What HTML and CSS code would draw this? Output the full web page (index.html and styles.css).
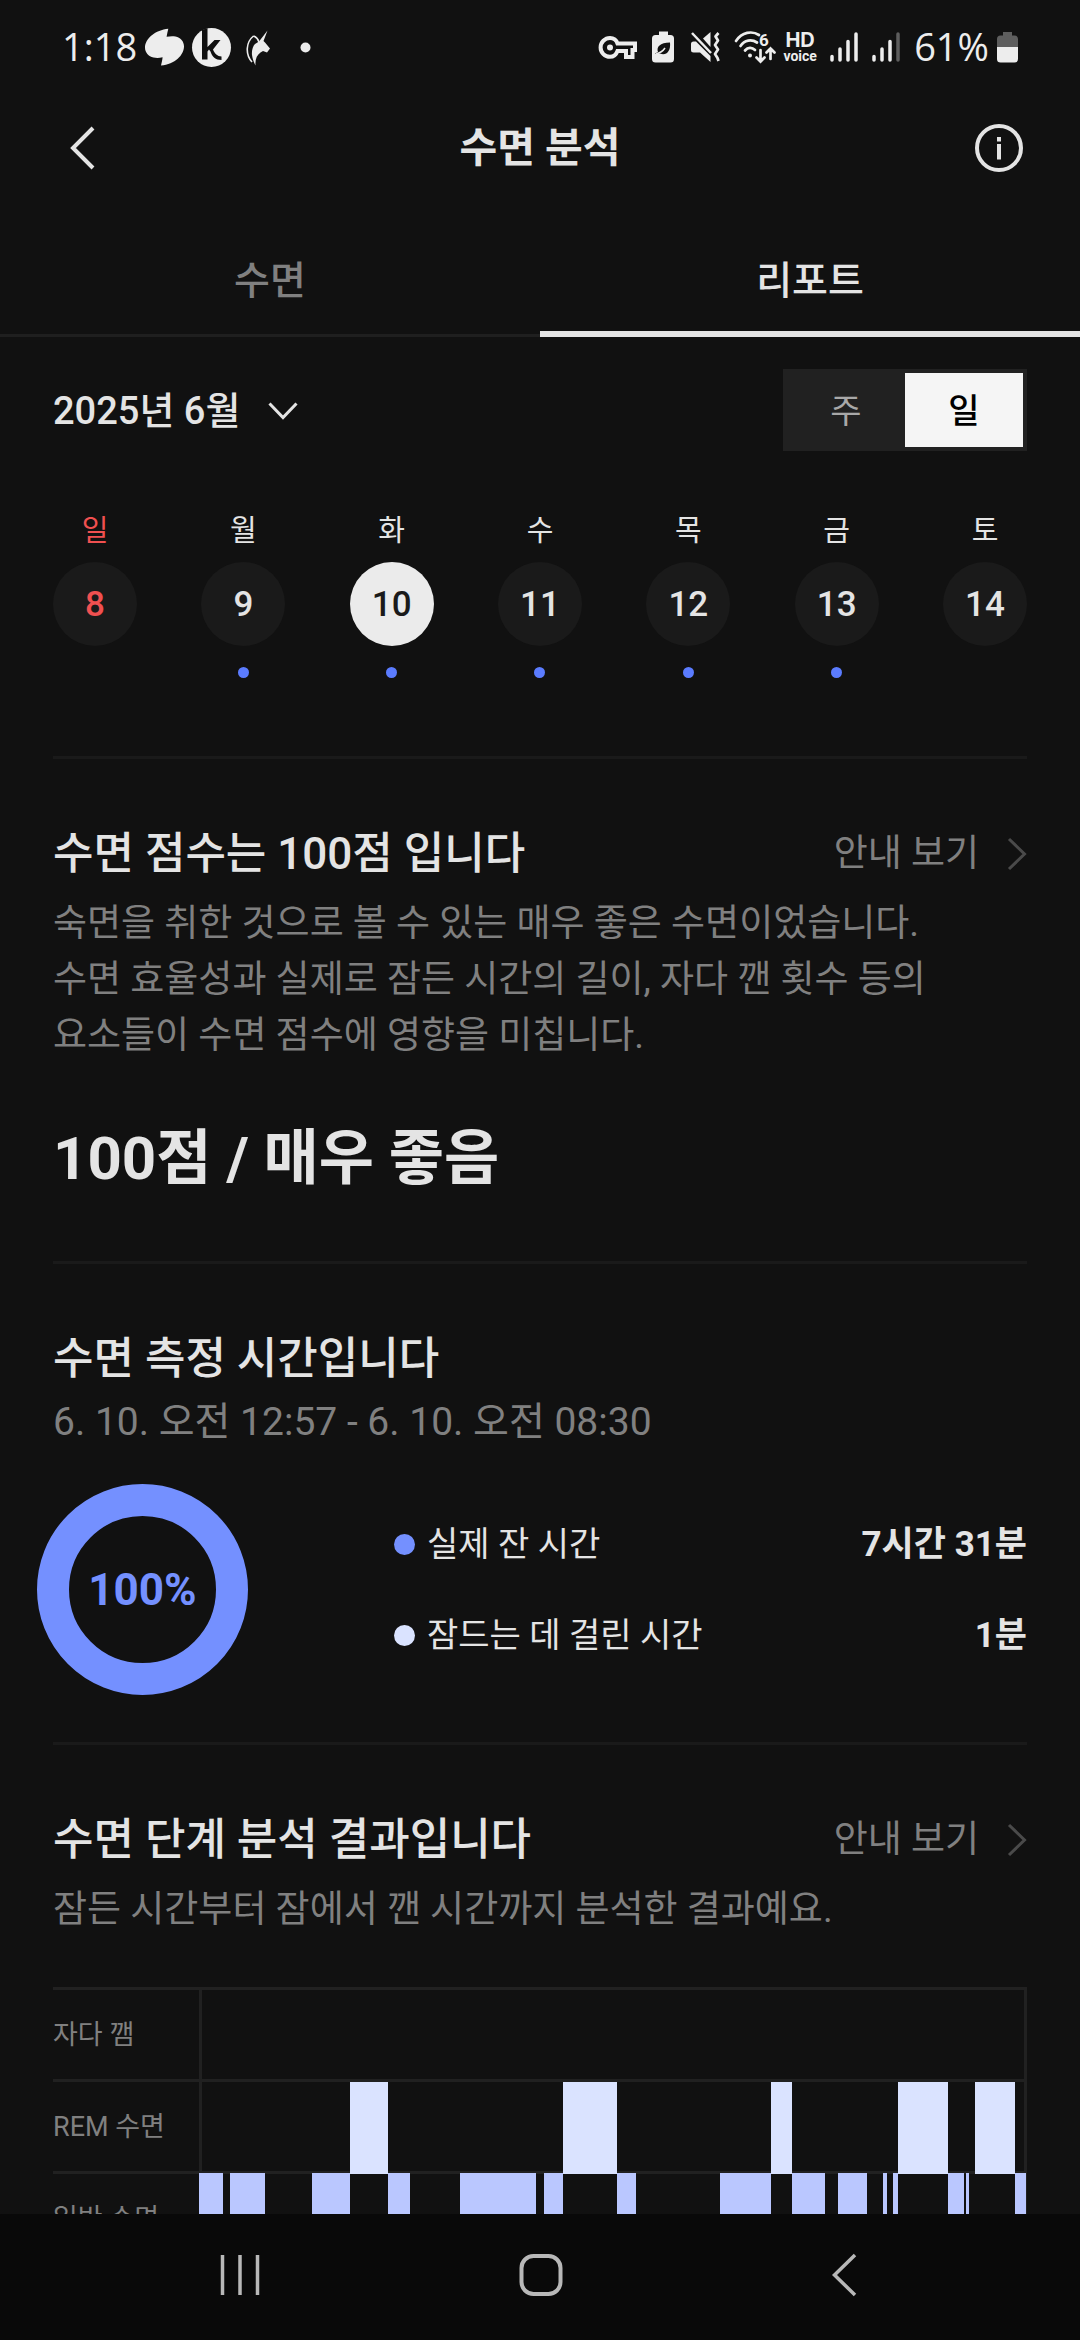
FILE: index.html
```html
<!DOCTYPE html>
<html lang="ko">
<head>
<meta charset="utf-8">
<meta name="viewport" content="width=device-width, initial-scale=1">
<title>수면 분석</title>
<link rel="stylesheet" href="styles.css">
</head>
<body>
<div class="status-bar">
  <div class="status-left">
    <span class="clock">1:18</span>
    <svg width="39" height="39" viewBox="0 0 39 39" fill="#ededed"><path d="M23.300 0.800C22.700 3.500 22 6 21.600 8.800C24.500 8.200 27.500 7.800 30.500 8.500C35.500 9.500 39 13.500 39 18.300C39 27 30 36.500 16 37.500C16.600 35 17.300 32.500 17.600 29.300C14.500 30 11.500 30.200 8.500 29.500C3.500 28.500 0 24.500 0 19.800C0 10.500 10.500 2 23.300 0.800Z"/></svg>
    <svg width="39" height="39" viewBox="0 0 39 39"><circle cx="19.500" cy="19.500" r="19.500" fill="#ededed"/><path d="M10 2v29.500h5.500v-8l1.500-2 1.500 2c1.500 5 5 8.500 11 8.500v-3.500c-4 0-7-3-8.500-7l7.500-9.500h-6L15.500 19V0z" fill="#101010"/></svg>
    <svg width="39" height="39" viewBox="0 0 39 39" fill="none" stroke="#ededed"><path d="M28.500 2.500L20 13.500L16 16C14 18 12.500 22 13 27C13.500 31 15 35 16.500 37.500C16 31 18 27 21.500 24.500L24 23L28 24.500L31 20.500L26 14.500L24.500 13Z" fill="#ededed" stroke="none"/><path d="M14.500 8C7 14 6 26 13 34M14.500 8C17 9 19 11 20 14" stroke-width="1.600"/></svg>
    <svg width="39" height="39" viewBox="0 0 39 39"><circle cx="19.500" cy="19.500" r="5" fill="#ededed"/></svg>
  </div>
  <div class="status-right">
    <svg width="39" height="32" viewBox="0 0 39 32" fill="none" stroke="#ededed" stroke-width="4"><path d="M18.500 12.500H36v6.500h-2.500v7H27v-6h-8.500C17 24 14 25.800 11 25.800a9.300 9.300 0 1 1 0-18.800c3.500 0 6.300 2 7.500 5.500z"/><circle cx="11" cy="16.400" r="3" fill="#ededed" stroke="none"/></svg>
    <svg width="24" height="32" viewBox="0 0 24 32"><path d="M7 0.500h9v3.500h2.500a3.500 3.500 0 0 1 3.500 3.500V28a3.500 3.500 0 0 1-3.500 3.500h-15A3.500 3.500 0 0 1 0 28V7.500A3.500 3.500 0 0 1 3.500 4H7z" fill="#ededed"/><path d="M3 23c1-1 2-1.500 3-2c-2-5 2-9.500 12-9.500c1 9-4 13.500-10 11c-1.500 0-3 .500-5 .500z" fill="#101010"/><path d="M4 23c4-1 7-3 9-6" stroke="#ededed" stroke-width="1.500" fill="none"/></svg>
    <svg width="30" height="32" viewBox="0 0 30 32" fill="#ededed"><path d="M6 10.500L20.500 25v6L10 21.500H3.500A2.500 2.500 0 0 1 1 19v-6a2.500 2.500 0 0 1 2.500-2.500z"/><path d="M13 7.500L20.500 1v15z"/><path d="M2 2l19 20" stroke="#ededed" stroke-width="2.500"/><path d="M28.500 2l-3 3.500 2.500 4-3 4.500 3 4.500-3 4.500 2.500 4 1 3" fill="none" stroke="#ededed" stroke-width="2.700" stroke-linejoin="round"/></svg>
    <div class="status-pair">
      <svg width="42" height="32" viewBox="0 0 42 32" fill="none" stroke="#ededed" stroke-width="2.700" stroke-linecap="round"><path d="M2 10C8 1 18-.500 25 4M6.500 15c4-6 11-7 16.500-3.500M11 19.500c3-3.500 7-3.500 10-.500"/><circle cx="16" cy="24.500" r="2" fill="#ededed" stroke="none"/><text x="25" y="15" font-family="Roboto, sans-serif" font-size="17" font-weight="700" fill="#ededed" stroke="none">6</text><path d="M26.500 19v11M22.500 26.500l4 4 4-4M36.500 28V17.500M32.500 21.500l4-4 4 4"/></svg>
      <div class="hd-voice"><span class="hd">HD</span><span class="voice">voice</span></div>
    </div>
    <svg width="28" height="32" viewBox="0 0 28 32" stroke="#ededed" stroke-width="3.500" stroke-linecap="round"><path d="M2 25.500v3.500M10 18v11M18 10.500V29M26 3v26"/></svg>
    <svg width="28" height="32" viewBox="0 0 28 32" stroke="#ededed" stroke-width="3.500" stroke-linecap="round"><path d="M2 25.500v3.500M10 18v11M18 10.500V29"/><path d="M26 3v26" stroke="#5e5e5e"/></svg>
    <div class="status-pair">
      <span class="clock">61%</span>
      <svg width="21" height="32" viewBox="0 0 21 32"><path d="M6 1h9v3.500h2.500A3.500 3.500 0 0 1 21 8v8H0V8a3.500 3.500 0 0 1 3.500-3.500H6z" fill="#5e5e5e"/><path d="M0 16h21v12a3.500 3.500 0 0 1-3.500 3.500h-14A3.500 3.500 0 0 1 0 28z" fill="#ededed"/></svg>
    </div>
  </div>
</div>

<header class="app-header">
  <button class="icon-button" aria-label="뒤로"><svg width="48" height="48" viewBox="0 0 48 48" fill="none" stroke="#e4e4e4" stroke-width="4"><path d="M36 4L16 24l20 20"/></svg></button>
  <h1>수면 분석</h1>
  <button class="icon-button" aria-label="정보"><svg width="48" height="48" viewBox="0 0 48 48" fill="none" stroke="#e4e4e4" stroke-width="4"><circle cx="24" cy="24" r="22"/><path d="M24 20v15.500M24 13v4.500"/></svg></button>
</header>

<nav class="tabs">
  <button class="tab">수면</button>
  <button class="tab tab-active">리포트</button>
</nav>

<main class="content">
  <div class="period">
    <button class="month">2025년 6월<svg width="30" height="20" viewBox="0 0 30 20" fill="none" stroke="#e4e4e4" stroke-width="3"><path d="M1.500 2.500L15 16.500l13.500-14"/></svg></button>
    <div class="toggle">
      <button class="toggle-item">주</button>
      <button class="toggle-item toggle-active">일</button>
    </div>
  </div>

  <div class="week">
    <div class="day sunday"><span class="day-name">일</span><button class="day-number">8</button></div>
    <div class="day recorded"><span class="day-name">월</span><button class="day-number">9</button></div>
    <div class="day recorded selected"><span class="day-name">화</span><button class="day-number">10</button></div>
    <div class="day recorded"><span class="day-name">수</span><button class="day-number">11</button></div>
    <div class="day recorded"><span class="day-name">목</span><button class="day-number">12</button></div>
    <div class="day recorded"><span class="day-name">금</span><button class="day-number">13</button></div>
    <div class="day"><span class="day-name">토</span><button class="day-number">14</button></div>
  </div>

  <section class="card">
    <div class="card-head">
      <h2>수면 점수는 100점 입니다</h2>
      <a class="guide" href="#">안내 보기<svg width="20" height="34" viewBox="0 0 20 34" fill="none" stroke="#4a4a4a" stroke-width="3"><path d="M2 2l15.500 15L2 32"/></svg></a>
    </div>
    <p class="lead">숙면을 취한 것으로 볼 수 있는 매우 좋은 수면이었습니다.<br>수면 효율성과 실제로 잠든 시간의 길이, 자다 깬 횟수 등의<br>요소들이 수면 점수에 영향을 미칩니다.</p>
    <p class="score">100점 / 매우 좋음</p>
  </section>

  <section class="card card-time">
    <h2>수면 측정 시간입니다</h2>
    <p class="range">6. 10. 오전 12:57 - 6. 10. 오전 08:30</p>
    <div class="time-summary">
      <div class="donut">100%</div>
      <dl class="legend">
        <div class="legend-row"><dt class="asleep">실제 잔 시간</dt><dd>7시간 31분</dd></div>
        <div class="legend-row"><dt class="latency">잠드는 데 걸린 시간</dt><dd>1분</dd></div>
      </dl>
    </div>
  </section>

  <section class="card card-stages">
    <div class="card-head">
      <h2>수면 단계 분석 결과입니다</h2>
      <a class="guide" href="#">안내 보기<svg width="20" height="34" viewBox="0 0 20 34" fill="none" stroke="#4a4a4a" stroke-width="3"><path d="M2 2l15.500 15L2 32"/></svg></a>
    </div>
    <p class="lead">잠든 시간부터 잠에서 깬 시간까지 분석한 결과예요.</p>
    <div class="stages">
      <div class="stage"><span class="stage-name">자다 깸</span><div class="plot"></div></div>
      <div class="stage"><span class="stage-name">REM 수면</span>
        <div class="plot"><svg class="bars rem" viewBox="0 0 828 92" preserveAspectRatio="none"><path d="M151 0h38v92h-38zM364 0h54v92h-54zM572 0h21v92h-21zM699 0h50v92h-50zM776 0h40v92h-40z"/></svg></div>
      </div>
      <div class="stage"><span class="stage-name">일반 수면</span>
        <div class="plot"><svg class="bars light" viewBox="0 0 828 92" preserveAspectRatio="none"><path d="M0 0h24v92H0zM31 0h35v92H31zM113 0h38v92h-38zM189 0h22v92h-22zM261 0h76v92h-76zM345 0h19v92h-19zM418 0h19v92h-19zM521 0h51v92h-51zM593 0h33v92h-33zM639 0h29v92h-29zM684 0h4v92h-4zM694 0h5v92h-5zM749 0h16v92h-16zM767 0h3v92h-3zM816 0h11v92h-11z"/></svg></div>
      </div>
    </div>
  </section>
</main>

<footer class="system-nav">
  <button aria-label="최근 앱"><svg width="48" height="48" viewBox="0 0 48 48" fill="none" stroke="#b8b8b8" stroke-width="3.500"><path d="M7.500 4v40M25 4v40M42.500 4v40"/></svg></button>
  <button aria-label="홈"><svg width="48" height="48" viewBox="0 0 48 48" fill="none" stroke="#b8b8b8" stroke-width="4"><rect x="5.500" y="5" width="39" height="38" rx="12"/></svg></button>
  <button aria-label="이전"><svg width="48" height="48" viewBox="0 0 48 48" fill="none" stroke="#b8b8b8" stroke-width="3.500"><path d="M38 4L17.500 24L38 44"/></svg></button>
</footer>
</body>
</html>
```
FILE: styles.css
```css
* {
  box-sizing: border-box;
}

body {
  margin: 0;
  height: 100vh;
  display: flex;
  flex-direction: column;
  overflow: hidden;
  background: #111111;
  color: #e4e4e4;
  font-family: Roboto, "Noto Sans CJK KR", sans-serif;
}

h1, h2, p, dl, dd {
  margin: 0;
}

button {
  padding: 0;
  border: 0;
  background: none;
  color: inherit;
  font: inherit;
}

svg {
  display: block;
  flex: none;
  overflow: visible;
}

/* Status bar */
.status-bar {
  height: 94px;
  flex: none;
  display: flex;
  justify-content: space-between;
  align-items: center;
  padding: 0 62px 0 62px;
  color: #ededed;
}

.status-left {
  display: flex;
  align-items: center;
  gap: 8px;
}

.status-right {
  display: flex;
  align-items: center;
  gap: 14px;
}

.status-pair {
  display: flex;
  align-items: center;
  gap: 8px;
}

.clock {
  padding-bottom: 2px;
  font-family: "Open Sans", Roboto, sans-serif;
  font-size: 38px;
  line-height: 48px;
}

.hd-voice {
  display: flex;
  flex-direction: column;
  align-items: center;
  width: 32px;
}

.hd {
  font: 700 20px/18px Inter, sans-serif;
}

.voice {
  font: 700 14px/14px Roboto, sans-serif;
}

/* Header and tabs */
.app-header {
  height: 108px;
  flex: none;
  display: flex;
  justify-content: space-between;
  align-items: center;
  padding: 0 57px;
}

.app-header h1 {
  font-size: 41px;
  line-height: 56px;
  font-weight: 700;
}

.tabs {
  height: 135px;
  flex: none;
  display: flex;
}

.tab {
  flex: 1;
  padding-top: 22px;
  box-shadow: inset 0 -3px #1f1f1f;
  color: #808080;
  font-size: 39px;
  line-height: 56px;
  font-weight: 500;
}

.tab-active {
  box-shadow: inset 0 -6px #e4e4e4;
  color: #e4e4e4;
}

/* Content */
.content {
  flex: 1;
  min-height: 0;
  overflow: hidden;
  padding: 32px 53px 0;
}

.period {
  display: flex;
  justify-content: space-between;
  align-items: center;
}

.month {
  display: flex;
  align-items: center;
  gap: 28px;
  padding-top: 2px;
  font-size: 38px;
  line-height: 56px;
  font-weight: 500;
}

.toggle {
  display: flex;
  padding: 4px;
  background: #212121;
}

.toggle-item {
  width: 118px;
  height: 74px;
  padding-top: 2px;
  color: #a8a8a8;
  font-size: 34px;
  line-height: 45px;
}

.toggle-active {
  background: #f5f5f5;
  color: #000000;
  font-weight: 500;
}

.week {
  display: flex;
  justify-content: space-between;
  height: 246px;
  margin-top: 59px;
}

.day {
  display: flex;
  flex-direction: column;
  align-items: center;
}

.day-name {
  font-size: 29px;
  line-height: 42px;
}

.day-number {
  width: 84px;
  height: 84px;
  margin-top: 10px;
  border-radius: 50%;
  background: #1a1a1a;
  font-size: 35px;
  line-height: 45px;
  font-weight: 500;
}

.sunday {
  color: #f05050;
}

.selected .day-number {
  background: #ebebeb;
  color: #1a1a1a;
}

.recorded::after {
  content: "";
  width: 11px;
  height: 11px;
  margin-top: 21px;
  border-radius: 50%;
  background: #5b7cff;
}

.card {
  padding: 67px 0 64px;
  border-top: 3px solid #1a1a1a;
}

.card-head {
  display: flex;
  justify-content: space-between;
  align-items: center;
}

h2 {
  font-size: 44px;
  line-height: 56px;
  font-weight: 500;
}

.guide {
  display: flex;
  align-items: center;
  gap: 28px;
  color: #808080;
  font-size: 37px;
  line-height: 58px;
  text-decoration: none;
}

.card-head {
  height: 56px;
}

.lead {
  margin-top: 14px;
  color: #808080;
  font-size: 37px;
  line-height: 56px;
}

.score {
  margin-top: 55px;
  margin-bottom: -2px;
  font-size: 60px;
  line-height: 80px;
  font-weight: 700;
}

/* Measured time */
.card-time {
  padding-bottom: 47px;
}

.range {
  margin-top: 7px;
  color: #808080;
  font-size: 39px;
  line-height: 56px;
}

.time-summary {
  display: flex;
  align-items: center;
  gap: 146px;
  margin: 34px 0 0 -16px;
}

.donut {
  display: grid;
  place-items: center;
  width: 211px;
  height: 211px;
  border: 32px solid #7490ff;
  border-radius: 50%;
  color: #7490ff;
  font-size: 44px;
  line-height: 56px;
  font-weight: 700;
}

.legend {
  flex: 1;
  display: grid;
  gap: 44px;
  font-size: 34px;
  line-height: 47px;
}

.legend-row {
  display: flex;
  justify-content: space-between;
}

.legend dt {
  display: flex;
  align-items: center;
  gap: 12px;
}

.legend dt::before {
  content: "";
  width: 21px;
  height: 21px;
  border-radius: 50%;
  background: #7490ff;
}

.legend .latency::before {
  background: #dae3ff;
}

.legend dd {
  font-size: 35px;
  font-weight: 700;
}

/* Sleep stages */
.stages {
  margin-top: 49px;
}

.stage {
  display: flex;
  height: 92px;
  border-top: 3px solid #212121;
}

.stage-name {
  width: 146px;
  align-self: center;
  color: #808080;
  font-size: 27px;
  line-height: 42px;
}

.plot {
  position: relative;
  flex: 1;
  border: solid #212121;
  border-width: 0 3px;
}

/* Bars lie over the frame and the rule below their row */
.bars {
  position: absolute;
  top: 0;
  left: -3px;
  z-index: 1;
  width: calc(100% + 6px);
  height: 92px;
  shape-rendering: crispEdges;
}

.rem {
  fill: #dae3ff;
}

.light {
  top: -1px;
  fill: #bac7ff;
}

/* System navigation */
.system-nav {
  height: 126px;
  flex: none;
  display: flex;
  justify-content: space-around;
  align-items: center;
  padding: 0 88px 4px;
  background: #090909;
}
```
